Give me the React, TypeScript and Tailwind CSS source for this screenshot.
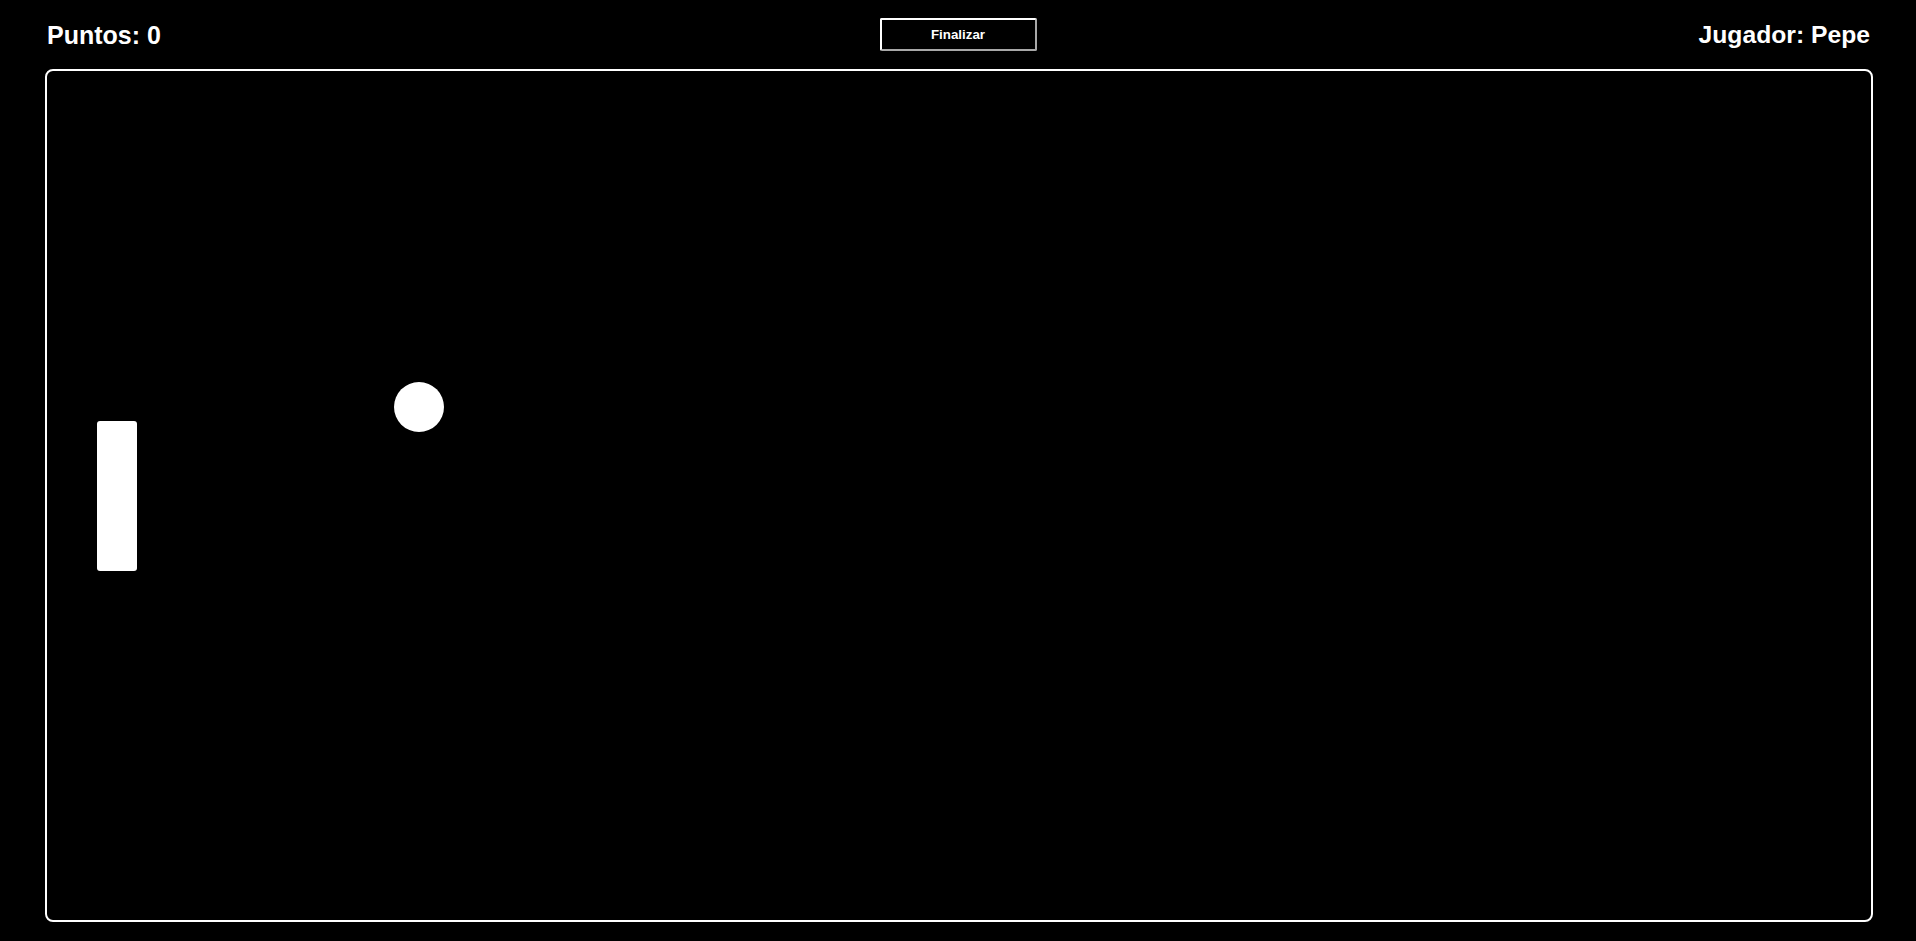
export default function App() {
  return (
    <div
      className="w-[1916px] h-[941px] bg-black text-white overflow-hidden"
      style={{ fontFamily: '"Liberation Sans", Arial, sans-serif' }}
    >
      <div className="h-[69px] px-[46px] flex items-center justify-between">
        <div className="w-[300px] text-[25px] font-bold leading-none pl-[1px] pt-[1px]">Puntos: 0</div>
        <button className="w-[157px] h-[33px] bg-black text-white text-[13.333px] font-bold border-2 border-t-white border-l-white border-r-[#a8a8a8] border-b-[#a8a8a8] rounded-[2px] flex items-center justify-center">
          Finalizar
        </button>
        <div className="w-[300px] text-[24.7px] font-bold leading-none text-right pr-0 pt-[1px]">Jugador: Pepe</div>
      </div>
      <div className="ml-[45px] w-[1828px] h-[853px] border-2 border-white rounded-[8px] relative">
        <div className="absolute left-[50px] top-[350px] w-[40px] h-[150px] bg-white rounded-[3px]" />
        <div className="absolute left-[347px] top-[311px] w-[50px] h-[50px] bg-white rounded-full" />
      </div>
    </div>
  );
}
